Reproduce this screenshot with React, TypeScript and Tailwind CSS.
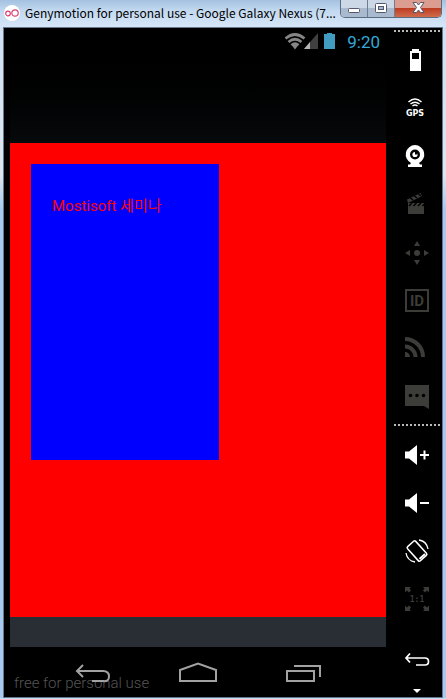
import type { ReactNode } from "react";

function Tool({ label, dim, children }: { label: string; dim?: boolean; children: ReactNode }) {
  return (
    <button
      type="button"
      aria-label={label}
      className={`flex h-12 w-full items-center justify-center ${dim ? "text-[#3c3c38]" : "text-white"}`}
    >
      <svg width="30" height="30" viewBox="0 0 30 30" fill="currentColor" aria-hidden="true">
        {children}
      </svg>
    </button>
  );
}

function Dots() {
  return <div className="h-[2px] w-[46px] bg-[repeating-linear-gradient(90deg,#b8b8b8_0_2px,transparent_2px_4px)]" />;
}

const speaker = <path d="M3 11.500h4L15 5v20l-8-6.500H3z" />;

function Sidebar() {
  return (
    <aside className="flex w-14 shrink-0 flex-col items-center bg-black pt-[2px] pl-[6px]">
      <Dots />
      <div className="w-full py-1">
        <Tool label="Battery">
          <path fillRule="evenodd" d="M10 4h7v2h2v20H8V6h2zM10 8v6h7V8z" />
        </Tool>
        <Tool label="GPS">
          <g fill="none" stroke="currentColor" strokeWidth="1.500">
            <path d="M6.500 9q6.500-6 13 0M8.500 11q4.500-3.500 9 0M10.500 13q2.500-2 5 0" />
          </g>
          <text x="13" y="23" textAnchor="middle" className="font-['DejaVu_Sans',sans-serif] text-[8px] font-bold">GPS</text>
        </Tool>
        <Tool label="Camera">
          <path fillRule="evenodd" d="M13 4a9.500 9.500 0 0 1 4 18l1 1.500h2V26H6v-2.500h2L9 22a9.500 9.500 0 0 1 4-18zm0 4.500a5 5 0 1 0 0 10 5 5 0 0 0 0-10z" />
          <circle cx="13" cy="13.500" r="2.600" />
          <path d="M13 13.500v-2.600h2.600v2.600z" fill="#000" />
        </Tool>
        <Tool label="Screencast" dim>
          <path d="M6 14h16v11H6z" />
          <path d="M5 10.500L18.500 4l1.500 3L6 14z" />
          <path d="M8 8.500l3 2.500M12 6.500l3 2.500M16 4.500l3 2.500M7 17l3-3M11.500 17l3-3M16 17l3-3M20.500 17l2-2" stroke="#000" strokeWidth="1.500" />
        </Tool>
        <Tool label="Move" dim>
          <circle cx="15" cy="16" r="3" />
          <path d="M15 4l3 5h-6zM15 28l3-5h-6zM3 16l5-3v6zM27 16l-5-3v6z" />
        </Tool>
        <Tool label="Identifiers" dim>
          <path d="M4 5h22v21H4z" fill="none" stroke="currentColor" strokeWidth="2" />
          <text x="15" y="21" textAnchor="middle" className="font-[Roboto,sans-serif] text-[15px] font-bold">ID</text>
        </Tool>
        <Tool label="Network" dim>
          <g fill="none" stroke="currentColor">
            <path d="M3 6A18 18 0 0 1 21 24" strokeWidth="4" />
            <path d="M3 13.500A10.500 10.500 0 0 1 13.500 24" strokeWidth="4" />
          </g>
          <path d="M3 19a5 5 0 0 1 5 5H3z" />
        </Tool>
        <Tool label="Messages" dim>
          <path d="M3 4h24v24l-5-3H3z" />
          <g fill="#000">
            <circle cx="8.500" cy="14.500" r="1.800" />
            <circle cx="15" cy="14.500" r="1.800" />
            <circle cx="21.500" cy="14.500" r="1.800" />
          </g>
        </Tool>
      </div>
      <Dots />
      <div className="w-full pt-[5px]">
        <Tool label="Volume up">
          {speaker}
          <path d="M18 14h9v2h-9zM21.500 10.500h2v9h-2z" />
        </Tool>
        <Tool label="Volume down">
          {speaker}
          <path d="M18 14h9v2h-9z" />
        </Tool>
        <Tool label="Rotate">
          <g fill="none" stroke="currentColor">
            <rect x="9.500" y="5.500" width="11" height="19" rx="1.500" strokeWidth="1.500" transform="rotate(-42 15 15)" />
            <path d="M17.500 23l5.500-5" strokeWidth="2" />
            <path d="M17 4a11 11 0 0 1 9 9M13 26a11 11 0 0 1-9-9" strokeWidth="1.300" />
          </g>
        </Tool>
        <Tool label="Actual size" dim>
          <path d="M3 3h6L7.500 4.500 9 6.500 7 8.500 5 6.500 3 8.500zM27 3h-6l1.500 1.500L21 6.500l2 2 2-2 2 2zM3 27h6l-1.500-1.500L9 23.500l-2-2-2 2-2-2zM27 27h-6l1.500-1.500-1.500-2 2-2 2 2 2-2z" />
          <text x="15" y="18" textAnchor="middle" className="font-['DejaVu_Sans_Mono',monospace] text-[8px] font-bold">1:1</text>
        </Tool>
      </div>
      <div className="w-full pt-[13px]">
        <Tool label="Back">
          <path d="M8 8.500l-4 4.500 4 4.500M4 13h19q3.500 0 3.500 3.500T23 20h-9" fill="none" stroke="currentColor" strokeWidth="1.700" />
        </Tool>
      </div>
      <button type="button" aria-label="More" className="flex h-[13px] w-full items-center justify-center text-white">
        <svg width="8" height="4" viewBox="0 0 8 4" fill="currentColor" aria-hidden="true"><path d="M0 0h8L4 4z" /></svg>
      </button>
    </aside>
  );
}

function TitleBar() {
  return (
    <header className="flex h-[27px] items-start bg-linear-to-b from-[#a3c1e0] via-[#c3d9f0] via-40% to-[#d6e6f8] pl-1">
      <svg className="mt-[5px] shrink-0" width="16" height="16" viewBox="0 0 16 16" aria-hidden="true">
        <circle cx="8" cy="8" r="8" fill="#fff" />
        <g fill="none" stroke="#dc3f72" strokeWidth="1.200">
          <circle cx="4" cy="8.500" r="2.300" />
          <circle cx="11" cy="8" r="3.200" />
        </g>
      </svg>
      <h1 className="ml-[5px] min-w-0 flex-1 pt-[5px] font-['Noto_Sans_CJK_KR',sans-serif] text-[12px] leading-4 whitespace-nowrap text-black">
        Genymotion for personal use - Google Galaxy Nexus (7...
      </h1>
      <div className="mr-1 flex h-[18px] shrink-0 overflow-hidden rounded-b-[5px] border border-t-0 border-[#5b6b80]">
        <button type="button" aria-label="Minimize" className="flex w-[27px] items-center justify-center border-r border-[#6d7d92] bg-linear-to-b from-[#ccd8e6] from-50% to-[#a9bace] to-50%">
          <svg width="13" height="12" viewBox="0 0 13 12" aria-hidden="true"><rect x="0.500" y="5.500" width="11" height="4" rx="1" fill="#fff" stroke="#53596b" /></svg>
        </button>
        <button type="button" aria-label="Maximize" className="flex w-[27px] items-center justify-center border-r border-[#6d7d92] bg-linear-to-b from-[#ccd8e6] from-50% to-[#a9bace] to-50%">
          <svg width="12" height="12" viewBox="0 0 12 12" aria-hidden="true"><rect x="0.500" y="0.500" width="11" height="9" rx="1" fill="#fff" stroke="#53596b" /><rect x="3.500" y="3.500" width="5" height="3" fill="#a5b8ce" stroke="#53596b" /></svg>
        </button>
        <button type="button" aria-label="Close" className="flex w-[46px] items-center justify-center bg-linear-to-b from-[#dc9c8f] from-45% via-[#bd3c22] via-50% to-[#cf6b4c]">
          <svg width="13" height="13" viewBox="0 0 13 13" aria-hidden="true"><path d="M1 .5h3.500l2 2.500 2-2.500H12L8.500 5.500l3.500 5H8.500l-2-2.500-2 2.500H1l3.500-5z" fill="#fff" stroke="#53596b" /></svg>
        </button>
      </div>
    </header>
  );
}

function StatusBar() {
  return (
    <div className="flex h-[115px] items-start justify-end bg-linear-to-b from-black to-[#070a0c] pt-1 pr-[6px]">
      <svg width="52" height="18" viewBox="0 0 52 18" aria-hidden="true">
        <g fill="none" stroke="#858585" strokeWidth="2.700">
          <path d="M1.500 6.500Q11 -1.500 20.500 6.500M4.500 10q6.500-5.500 13 0M7.500 13.200q3.500-3 7 0" />
        </g>
        <path d="M11 17.500l-3-4q3-2 6 0z" fill="#858585" />
        <path d="M34 1v16H20z" fill="#404040" />
        <path d="M26 10v7h-6z" fill="#b5b5b5" />
        <path d="M43 1h5v1h3v15H40V2h3z" fill="#429cc2" />
      </svg>
      <time className="ml-[11px] font-[Roboto,sans-serif] text-[17px] leading-5 text-[#33a9d9]">9:20</time>
    </div>
  );
}

function NavBar() {
  return (
    <nav className="relative h-[50px] bg-black">
      <p className="absolute bottom-1 left-1 font-[Roboto,sans-serif] text-[15px] leading-5 font-light text-[#555]">free for personal use</p>
      <div className="relative flex justify-around px-[30px] pt-[13px] text-[#a2a2a2]">
        <button type="button" aria-label="Back">
          <svg width="38" height="24" viewBox="0 0 38 24" fill="none" stroke="currentColor" strokeWidth="2" aria-hidden="true">
            <path d="M9 5L3 11l6 6M3 11h26q6 0 6 5.500T29 21H18" />
          </svg>
        </button>
        <button type="button" aria-label="Home">
          <svg width="38" height="24" viewBox="0 0 38 24" fill="none" stroke="currentColor" strokeWidth="2" aria-hidden="true">
            <path d="M1 21V10l18-6.500L37 10v11z" />
          </svg>
        </button>
        <button type="button" aria-label="Recent apps">
          <svg width="38" height="24" viewBox="0 0 38 24" fill="none" stroke="currentColor" strokeWidth="2" aria-hidden="true">
            <path d="M3 11h27v10H3zM10 6h26v11" />
          </svg>
        </button>
      </div>
    </nav>
  );
}

export default function App() {
  return (
    <div className="bg-linear-to-b from-[#cfe0f2] via-[#dde6ec] via-25% to-[#a9caee] to-30%">
      <TitleBar />
      <div className="mx-[3px] flex border border-[#66788c] bg-black">
        <main className="min-w-0 flex-1 pl-[6px]">
          <StatusBar />
          <section className="h-[474px] bg-[#ff0000] p-[21px]">
            <div className="h-[296px] w-[188px] bg-[#0000ff] px-[21px] py-8">
              <p className="font-[Roboto,'Noto_Sans_CJK_KR',sans-serif] text-[15px] leading-5 text-[#ff0000]">Mostisoft 세미나</p>
            </div>
          </section>
          <div className="h-[30px] bg-[#292d34]" />
          <NavBar />
        </main>
        <Sidebar />
      </div>
      <div className="h-px bg-[#c4dcf5]" />
    </div>
  );
}
